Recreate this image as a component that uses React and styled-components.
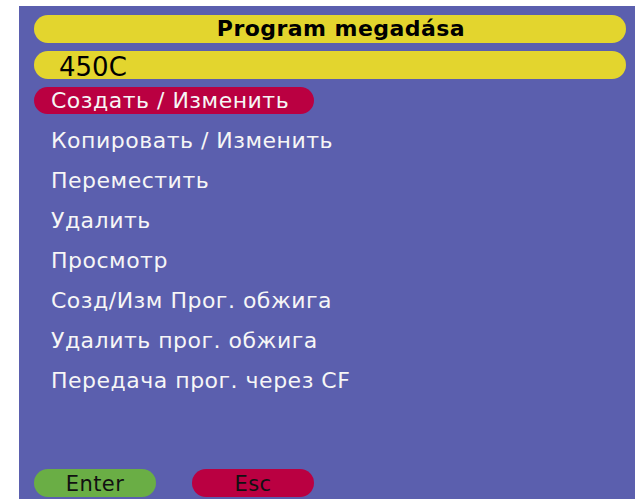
import styled, { createGlobalStyle } from 'styled-components';

const GlobalStyle = createGlobalStyle`
  html, body {
    margin: 0;
    padding: 0;
    background: #ffffff;
  }
  body {
    font-family: 'DejaVu Sans', sans-serif;
  }
`;

const items = [
  'Создать / Изменить',
  'Копировать / Изменить',
  'Переместить',
  'Удалить',
  'Просмотр',
  'Созд/Изм Прог. обжига',
  'Удалить прог. обжига',
  'Передача прог. через CF',
];

export default function App() {
  return (
    <>
      <GlobalStyle />
      <Screen>
        <Panel>
          <TitleBar>Program megadása</TitleBar>
          <NameBar>450C</NameBar>
          <Menu>
            {items.map((item, i) => (
              <MenuItem key={item} $active={i === 0}>
                {item}
              </MenuItem>
            ))}
          </Menu>
          <Footer>
            <KeyButton $color="#6aae45">Enter</KeyButton>
            <KeyButton $color="#ba0041">Esc</KeyButton>
          </Footer>
        </Panel>
      </Screen>
    </>
  );
}

const Screen = styled.div`
  width: 635px;
  height: 499px;
  padding: 6px 0 0 19px;
  box-sizing: border-box;
  overflow: hidden;
`;

const Panel = styled.div`
  height: 100%;
  background: #5b5fae;
  padding: 9px 9px 2px 15px;
  box-sizing: border-box;
  display: flex;
  flex-direction: column;
`;

const Bar = styled.div`
  height: 28px;
  border-radius: 14px;
  background: #e3d52e;
  color: #000;
`;

const TitleBar = styled(Bar)`
  font-weight: bold;
  font-size: 22px;
  letter-spacing: 0.45px;
  line-height: 28px;
  text-align: center;
  padding-left: 22px;
`;

const NameBar = styled(Bar)`
  margin-top: 8px;
  font-size: 26px;
  line-height: 33px;
  padding-left: 25px;
  overflow: visible;
`;

const Menu = styled.div`
  display: flex;
  flex-direction: column;
  gap: 13px;
  margin-top: 8px;
`;

const MenuItem = styled.div`
  height: 27px;
  width: 280px;
  box-sizing: border-box;
  border-radius: 14px;
  padding-left: 17px;
  font-size: 22px;
  letter-spacing: 0.5px;
  line-height: 27px;
  white-space: nowrap;
  color: #f6f6f6;
  background: ${p => (p.$active ? '#ba0041' : 'transparent')};
`;

const Footer = styled.div`
  margin-top: auto;
  display: flex;
  gap: 36px;
`;

const KeyButton = styled.div`
  width: 122px;
  height: 28px;
  border-radius: 14px;
  background: ${p => p.$color};
  color: #111;
  font-size: 21px;
  letter-spacing: 0.4px;
  line-height: 30px;
  text-align: center;
`;
